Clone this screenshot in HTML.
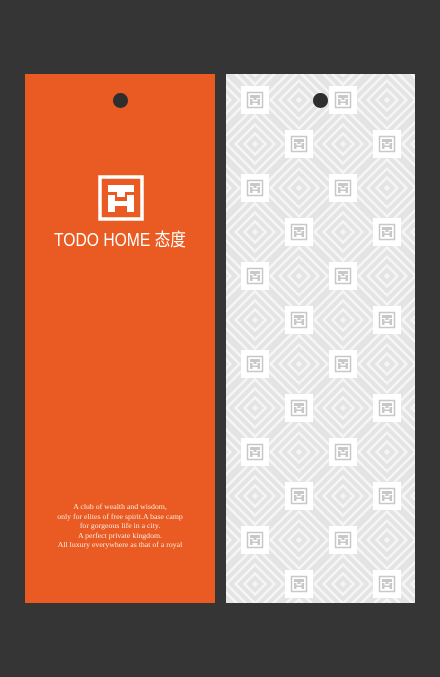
<!DOCTYPE html>
<html><head><meta charset="utf-8"><style>
html,body{margin:0;padding:0}
body{width:440px;height:677px;background:#353535;position:relative;overflow:hidden;font-family:"Liberation Sans","Noto Sans CJK SC",sans-serif}
.card{position:absolute;top:74px;height:529px}
.l{left:25px;width:190px;background:#e95b22}
.r{left:226px;width:189px;background:#f4f4f4;overflow:hidden}
.hole{position:absolute;width:15px;height:15px;border-radius:50%;background:#2e2e2e;top:19px}
.brand{position:absolute;top:152px;left:0;width:190px;text-align:center;color:#fff;font-size:18px;transform:scaleX(0.87);white-space:nowrap}
.txt{position:absolute;top:428px;left:0;width:190px;text-align:center;color:#fbeee6;font-family:"Liberation Serif",serif;font-size:7.8px;line-height:9.6px}
</style></head><body>
<div class="card l">
 <div class="hole" style="left:88px"></div>
 <svg style="position:absolute;left:73px;top:101px" width="46" height="46" viewBox="0 0 46 46">
  <rect x="2" y="2" width="42" height="42" fill="none" stroke="#fff" stroke-width="3.5"/>
  <path d="M10 10H36V17H27V22H19V17H10Z" fill="#fff"/>
  <path d="M10 20H17V26H29V20H36V37H29V31H17V37H10Z" fill="#fff"/>
 </svg>
 <div class="brand">TODO HOME 态度</div>
 <div class="txt">A club of wealth and wisdom,<br>only for elites of free spirit.A base camp<br>for gorgeous life in a city.<br>A perfect private kingdom.<br>All luxury everywhere as that of a royal</div>
</div>
<div class="card r">
 <svg width="189" height="529" style="position:absolute;left:0;top:0">
  <defs>
   <g id="dm" fill="none" stroke="#e4e4e4" stroke-width="4">
    <path d="M0 -6L6 0L0 6L-6 0Z"/><path d="M0 -15L15 0L0 15L-15 0Z"/><path d="M0 -24L24 0L0 24L-24 0Z"/><path d="M0 -33L33 0L0 33L-33 0Z"/><path d="M0 -42L42 0L0 42L-42 0Z"/>
   </g>
   <g id="tl">
    <rect x="-14" y="-14" width="28" height="28" fill="#fff"/>
    <rect x="-7.5" y="-7.5" width="15" height="15" fill="none" stroke="#c8c8c8" stroke-width="1.5"/>
    <path d="M-5 -5H5V-2H1.5V0H-1.5V-2H-5Z M-5 -1H-2.5V1.5H2.5V-1H5V5H2.5V3H-2.5V5H-5Z" fill="#c8c8c8"/>
   </g>
   <pattern id="p" x="7" y="4" width="88" height="88" patternUnits="userSpaceOnUse">
    <rect width="88" height="88" fill="#f6f6f6"/>
    <use href="#dm" x="66" y="22"/><use href="#dm" x="66" y="110"/><use href="#dm" x="-22" y="22"/><use href="#dm" x="-22" y="110"/>
    <use href="#dm" x="22" y="66"/><use href="#dm" x="110" y="66"/><use href="#dm" x="22" y="-22"/><use href="#dm" x="110" y="-22"/>
    <use href="#tl" x="22" y="22"/><use href="#tl" x="66" y="66"/>
   </pattern>
  </defs>
  <rect width="189" height="529" fill="url(#p)"/>
 </svg>
 <div class="hole" style="left:87px"></div>
</div>
</body></html>
